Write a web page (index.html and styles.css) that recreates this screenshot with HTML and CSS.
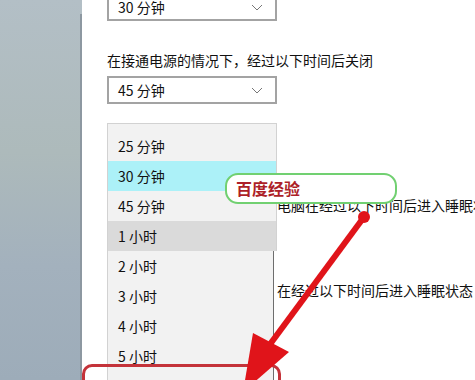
FILE: index.html
```html
<!DOCTYPE html>
<html lang="zh-CN">
<head>
    <meta charset="UTF-8">
    <meta name="viewport" content="width=device-width, initial-scale=1.0">
    <title>电源和睡眠</title>
    <link rel="stylesheet" href="styles.css">
</head>
<body>
    <!-- 左侧导航栏 -->
    <div class="sidebar">
        <div class="sidebar-edge"></div>
    </div>

    <!-- 设置内容 -->
    <div class="main">
        <div class="select">
            <span>30 分钟</span>
            <svg class="chevron" width="12" height="7" viewBox="0 0 12 7"><polyline points="1,1 6,6 11,1"/></svg>
        </div>
        <p class="label">在接通电源的情况下，经过以下时间后关闭</p>
        <div class="select select-second">
            <span>45 分钟</span>
            <svg class="chevron" width="12" height="7" viewBox="0 0 12 7"><polyline points="1,1 6,6 11,1"/></svg>
        </div>
        <p class="label label-sleep">电脑在经过以下时间后进入睡眠状态</p>
        <p class="label label-sleep-ac">在经过以下时间后进入睡眠状态</p>
    </div>

    <!-- 展开的下拉列表 -->
    <div class="dropdown">
        <div class="dropdown-top">
            <div class="option">25 分钟</div>
            <div class="option option-hover">30 分钟</div>
            <div class="option">45 分钟</div>
            <div class="option option-selected">1 小时</div>
        </div>
        <div class="dropdown-bottom">
            <div class="option">2 小时</div>
            <div class="option">3 小时</div>
            <div class="option">4 小时</div>
            <div class="option">5 小时</div>
            <div class="option option-faded">6 小时</div>
        </div>
    </div>

    <!-- 标注 -->
    <div class="mark-box"></div>
    <div class="callout">百度经验</div>
    <svg class="arrow" width="475" height="380" viewBox="0 0 475 380">
        <line x1="364" y1="217" x2="268" y2="347" />
        <polygon points="243,392 253,333 289,352" />
        <circle cx="364" cy="217" r="6" />
    </svg>
</body>
</html>
```

FILE: styles.css
```css
body {
    position: relative;
    display: flex;
    width: 475px;
    height: 380px;
    margin: 0;
    overflow: hidden;
    background-color: #FFFFFF;
    color: #111111;
    font-family: "Noto Sans CJK SC", "Noto Sans", sans-serif;
    font-size: 14px;
}

.sidebar {
    flex: none;
    display: flex;
    justify-content: flex-end;
    width: 82px;
    padding-top: 14px;
    box-sizing: border-box;
    background: linear-gradient(180deg, #b3bfc6 0%, #adbabb 40%, #a3b1bd 70%, #9dacb9 100%);
}

.sidebar-edge {
    width: 2px;
    background-color: #8d98a1;
}

.main {
    flex: 1;
    margin-top: -7px;
    padding-left: 25px;
    white-space: nowrap;
}

.select {
    display: flex;
    align-items: center;
    justify-content: space-between;
    width: 170px;
    height: 28px;
    box-sizing: border-box;
    padding: 0 12px 0 9px;
    border: 2px solid #a3a3a3;
    line-height: 20px;
}

.chevron {
    fill: none;
    stroke: #777777;
    stroke-width: 1;
}

.label {
    margin: 29px 0 0;
    line-height: 20px;
}

.select-second {
    margin-top: 6px;
}

.label-sleep {
    margin-top: 91px;
    padding-left: 170px;
}

.label-sleep-ac {
    margin-top: 65px;
    padding-left: 170px;
}

.dropdown {
    position: absolute;
    left: 107px;
    top: 123px;
    width: 170px;
}

.dropdown-top {
    padding-top: 7px;
    background-color: #f2f2f2;
    border: 1px solid #d2d2d2;
    border-bottom: none;
}

.dropdown-bottom {
    width: 167px;
    box-sizing: border-box;
    background-color: #f2f2f2;
    border-left: 1px solid #d2d2d2;
    border-right: 1px solid #6e6e6e;
}

.option {
    height: 30px;
    padding-left: 10px;
    line-height: 30px;
}

.option-hover {
    background-color: #acf1f8;
}

.option-selected {
    background-color: #dadada;
}

.option-faded {
    color: #9a9a9a;
}

.mark-box {
    position: absolute;
    left: 82px;
    top: 364px;
    width: 199px;
    height: 40px;
    box-sizing: border-box;
    border: 3px solid #c4333a;
    border-radius: 10px;
}

.callout {
    position: absolute;
    left: 225px;
    top: 173px;
    width: 172px;
    height: 31px;
    box-sizing: border-box;
    padding-left: 9px;
    border: 2px solid #71d071;
    border-radius: 13px;
    background-color: #FFFFFF;
    color: #ad1f28;
    font-size: 16px;
    font-weight: bold;
    line-height: 27px;
}

.arrow {
    position: absolute;
    left: 0;
    top: 0;
}

.arrow line {
    stroke: #e0141a;
    stroke-width: 6;
}

.arrow polygon,
.arrow circle {
    fill: #e0141a;
}
```
